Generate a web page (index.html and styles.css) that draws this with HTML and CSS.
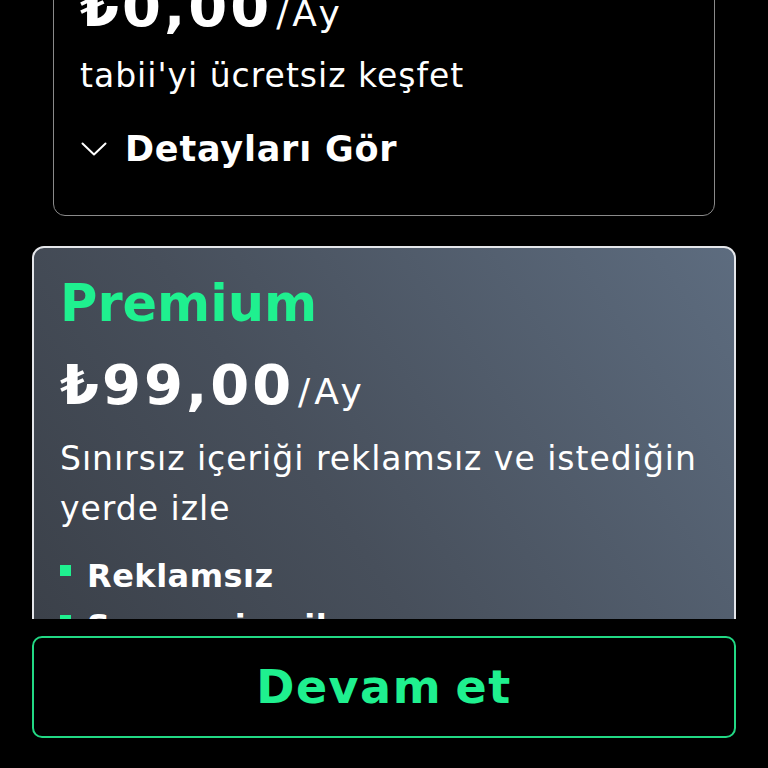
FILE: index.html
```html
<!DOCTYPE html>
<html lang="tr">
<head>
<meta charset="utf-8">
<title>tabii - Paket Seç</title>
<link rel="stylesheet" href="styles.css">
</head>
<body>
<div class="screen">
  <div class="scroll">
    <div class="content">
      <section class="plan plan-free">
        <h2 class="plan-title">Reklamlı</h2>
        <div class="price"><span class="amount">₺0,00</span><span class="per">/Ay</span></div>
        <p class="desc">tabii'yi ücretsiz keşfet</p>
        <button class="details">
          <svg class="chev" width="26" height="14" viewBox="0 0 26 14"><path d="M1.5 1.5 L13 12.5 L24.5 1.5" fill="none" stroke="#fff" stroke-width="2" stroke-linecap="round" stroke-linejoin="round"/></svg>
          <span>Detayları Gör</span>
        </button>
      </section>
      <section class="plan plan-premium">
        <h2 class="plan-title">Premium</h2>
        <div class="price"><span class="amount">₺99,00</span><span class="per">/Ay</span></div>
        <p class="desc">Sınırsız içeriği reklamsız ve istediğin yerde izle</p>
        <ul class="features">
          <li><span class="sq"></span>Reklamsız</li>
          <li><span class="sq"></span>Sınırsız içerik</li>
          <li><span class="sq"></span>Her yerde izle</li>
        </ul>
      </section>
    </div>
  </div>
  <div class="footer">
    <button class="cta">Devam et</button>
  </div>
</div>
</body>
</html>
```

FILE: styles.css
```css
* { box-sizing: border-box; }
html, body { margin: 0; padding: 0; background: #000; }
body {
  font-family: "DejaVu Sans", Inter, sans-serif;
  color: #fff;
}
.screen {
  height: 768px;
  display: flex;
  flex-direction: column;
  overflow: hidden;
}
.scroll {
  flex: 1;
  overflow: hidden;
}
.content {
  margin-top: -130px;
  display: flex;
  flex-direction: column;
  gap: 30px;
}
.plan {
  border-radius: 12px;
  padding: 22px 26px 0;
}
.plan-free {
  margin: 0 53px;
  border: 1.5px solid #8a8a8a;
  padding-bottom: 41px;
}
.plan-premium {
  margin: 0 32px;
  border: 2px solid #e4e6ea;
  background: linear-gradient(55deg, #383d45 0%, #474f5b 45%, #5d6c7f 100%);
  padding-top: 24px;
  padding-bottom: 60px;
}
.plan-title {
  margin: 0;
  font-size: 51px;
  line-height: 64px;
  font-weight: 700;
  color: #1ff08f;
}
.price {
  margin-top: 14px;
  height: 72px;
  line-height: 72px;
  white-space: nowrap;
}
.plan-premium .price { margin-top: 13px; }
.amount {
  font-size: 56px;
  font-weight: 700;
  letter-spacing: 3px;
}
.per {
  font-size: 36px;
  font-weight: 400;
  letter-spacing: 4px;
  margin-left: 4px;
}
.desc {
  margin: 13px 0 0;
  font-size: 33px;
  line-height: 50px;
  font-weight: 400;
  letter-spacing: 1px;
}
.plan-free .desc { margin-top: 8px; }
.details {
  margin-top: 23px;
  padding: 0;
  background: none;
  border: 0;
  color: #fff;
  font-family: inherit;
  display: flex;
  align-items: center;
  gap: 18px;
  font-size: 35px;
  line-height: 50px;
  font-weight: 700;
  letter-spacing: 0.8px;
}
.chev { display: block; margin-left: 1px; }
.features {
  list-style: none;
  margin: 17px 0 0;
  padding: 0;
}
.features li {
  display: flex;
  align-items: flex-start;
  gap: 16px;
  font-size: 32px;
  line-height: 50px;
  font-weight: 700;
  letter-spacing: 0.5px;
}
.sq {
  flex: none;
  width: 11px;
  height: 11px;
  margin-top: 14px;
  background: #1ff08f;
}
.footer {
  flex: none;
  padding: 17px 32px 30px;
  background: #000;
}
.cta {
  display: block;
  width: 100%;
  height: 102px;
  background: #000;
  border: 2px solid #22d884;
  border-radius: 10px;
  color: #1ff08f;
  font-family: inherit;
  font-size: 46px;
  font-weight: 700;
  letter-spacing: 1.5px;
  word-spacing: -4px;
}
```
